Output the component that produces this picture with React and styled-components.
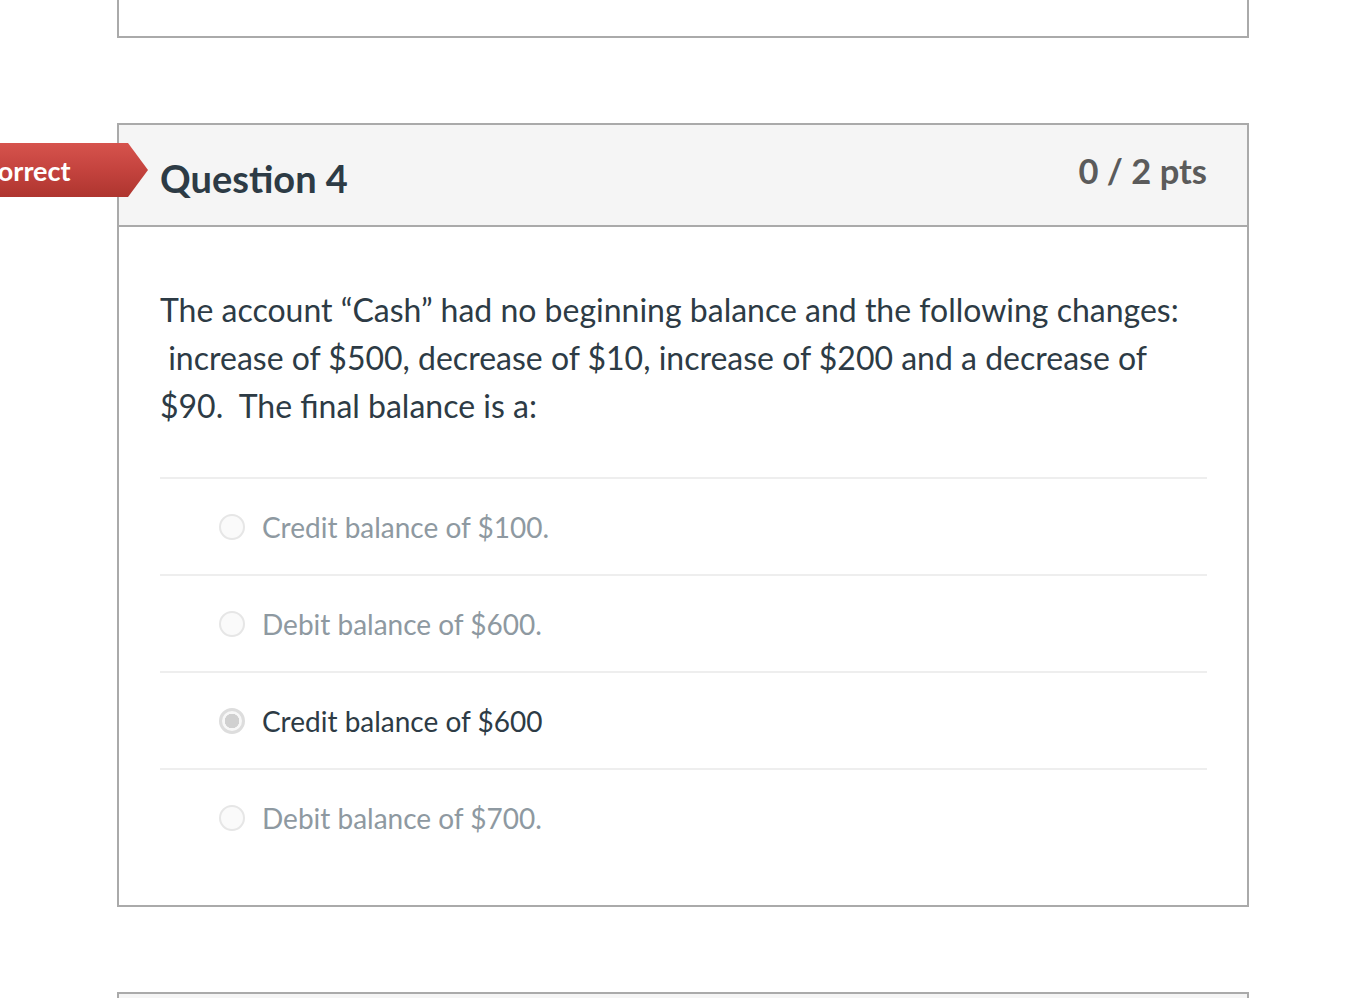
import React from 'react'
import styled, { createGlobalStyle } from 'styled-components'

const GlobalStyle = createGlobalStyle`
  html, body {
    margin: 0;
    padding: 0;
    background: #ffffff;
    font-family: Lato, "Open Sans", sans-serif;
    overflow: hidden;
  }
`;

const Page = styled.div`
  display: flex;
  flex-direction: column;
  padding-left: 117px;
  width: 1132px;
  height: 998px;
  overflow: hidden;

  & > * {
    flex-shrink: 0;
  }
`;

const PrevCard = styled.div`
  height: 36px;
  border: 2px solid #aaaaaa;
  border-top: none;
`;

const Card = styled.div`
  position: relative;
  margin-top: ${({ gap }) => gap}px;
  border: 2px solid #aaaaaa;
  background: #ffffff;
`;

const NextCard = styled(Card)`
  height: 40px;
  border-bottom: none;
  background: #f5f5f5;
`;

const Badge = styled.div`
  position: absolute;
  left: -169px;
  top: 18px;
  width: 198px;
  height: 54px;
  display: flex;
  align-items: center;
  padding-left: 12px;
  box-sizing: border-box;
  background: linear-gradient(to bottom, #d6534d 0%, #c4433e 50%, #ae352f 100%);
  color: #ffffff;
  font-size: 27px;
  font-weight: 700;
  clip-path: polygon(0 0, calc(100% - 20px) 0, 100% 50%, calc(100% - 20px) 100%, 0 100%);
`;

const Header = styled.div`
  display: flex;
  justify-content: space-between;
  align-items: flex-start;
  height: 100px;
  padding: 0 40px 0 41px;
  background: #f5f5f5;
  border-bottom: 2px solid #aaaaaa;
`;

const Title = styled.h2`
  margin: 31px 0 0;
  font-size: 38px;
  font-weight: 700;
  line-height: 1.2;
  color: #2d3b45;
`;

const Points = styled.div`
  margin-top: 25px;
  font-size: 34.5px;
  font-weight: 700;
  line-height: 1.2;
  color: #5b5b5b;
`;

const Body = styled.div`
  padding: 59px 40px 40px 41px;
`;

const Prompt = styled.p`
  margin: 0 0 47px;
  font-size: 32px;
  line-height: 48px;
  color: #2d3b45;
`;

const Answer = styled.div`
  display: flex;
  align-items: center;
  height: 95px;
  border-top: 2px solid #eeeeee;
  padding-left: 59px;
  gap: 17px;
`;

const Radio = styled.span`
  width: 26px;
  height: 26px;
  box-sizing: border-box;
  border-radius: 50%;
  border: ${({ checked }) => (checked ? '3px solid #dddddd' : '2px solid #e6e6e6')};
  background: ${({ checked }) =>
    checked ? 'radial-gradient(circle, #d0d0d0 0 7px, #f7f7f7 7.5px)' : '#fafafa'};
  flex-shrink: 0;
`;

const AnswerText = styled.span`
  margin-top: 3px;
  font-size: 28px;
  line-height: 1.2;
  color: ${({ checked }) => (checked ? '#2d3b45' : '#8e99a1')};
`;

const answers = [
  { text: 'Credit balance of $100.', checked: false },
  { text: 'Debit balance of $600.', checked: false },
  { text: 'Credit balance of $600', checked: true },
  { text: 'Debit balance of $700.', checked: false },
];

export default function App() {
  return (
    <>
      <GlobalStyle />
      <Page>
        <PrevCard />
        <Card gap={85}>
          <Badge>Incorrect</Badge>
          <Header>
            <Title>Question 4</Title>
            <Points>0 / 2 pts</Points>
          </Header>
          <Body>
            <Prompt>
              The account “Cash” had no beginning balance and the following changes:
              <br />
              &nbsp;increase of $500, decrease of $10, increase of $200 and a decrease of
              <br />
              $90.&nbsp; The final balance is a:
            </Prompt>
            {answers.map((a) => (
              <Answer key={a.text}>
                <Radio checked={a.checked} />
                <AnswerText checked={a.checked}>{a.text}</AnswerText>
              </Answer>
            ))}
          </Body>
        </Card>
        <NextCard gap={85} />
      </Page>
    </>
  )
}
